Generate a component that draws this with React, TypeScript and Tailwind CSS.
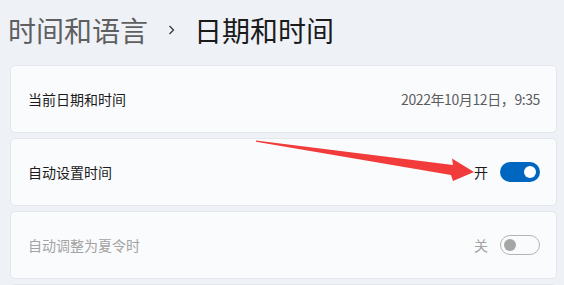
const font = { fontFamily: '"Noto Sans CJK SC", "Noto Sans", sans-serif' };

function Toggle({ on }: { on: boolean }) {
  if (on) {
    return (
      <div className="flex h-5 w-10 items-center justify-end rounded-full bg-[#0067c0] pr-[4px]">
        <div className="h-3 w-3 rounded-full bg-white" />
      </div>
    );
  }
  return (
    <div className="flex h-5 w-10 items-center rounded-full border border-[#b4b4b4] pl-[3px]">
      <div className="h-3 w-3 rounded-full bg-[#a6a6a6]" />
    </div>
  );
}

function Card({ children }: { children?: React.ReactNode }) {
  return (
    <div className="flex h-[68px] items-center justify-between rounded-[5px] border border-[#e3e6ea] bg-[#fafbfd] pl-[17px] pr-[16px]">
      {children}
    </div>
  );
}

export default function App() {
  return (
    <div className="relative h-[285px] w-[564px] overflow-hidden bg-[#eef2f7]" style={font}>
      <div className="flex items-center pl-[8px] pt-[16px] text-[28px] leading-[28px]">
        <span className="text-[#5f5f5f]">时间和语言</span>
        <svg className="ml-[20px] mr-[18px]" width="8" height="10" viewBox="0 0 8 10">
          <path d="M1.5 1 L5.5 5 L1.5 9" fill="none" stroke="#3a3a3a" strokeWidth="1.3" />
        </svg>
        <span className="text-[#1b1b1b]">日期和时间</span>
      </div>

      <div className="mt-[21px] ml-[10px] mr-[7px] flex flex-col gap-[5px] text-[14px]">
        <Card>
          <span className="text-[#1b1b1b]">当前日期和时间</span>
          <span className="tracking-[-0.4px] text-[#5d5d5d]">2022年10月12日，9:35</span>
        </Card>
        <Card>
          <span className="text-[#1b1b1b]">自动设置时间</span>
          <div className="flex items-center gap-[12px]">
            <span className="text-[#1b1b1b]">开</span>
            <Toggle on />
          </div>
        </Card>
        <Card>
          <span className="text-[#a3a3a3]">自动调整为夏令时</span>
          <div className="flex items-center gap-[12px]">
            <span className="text-[#a3a3a3]">关</span>
            <Toggle on={false} />
          </div>
        </Card>
        <Card />
      </div>

      <svg className="pointer-events-none absolute left-0 top-0" width="564" height="285" viewBox="0 0 564 285">
        <polygon
          points="256,140.5 453,165 452,158.5 474,172 453,181 451,175 256,141.8"
          fill="#f23b3b"
        />
      </svg>
    </div>
  );
}
